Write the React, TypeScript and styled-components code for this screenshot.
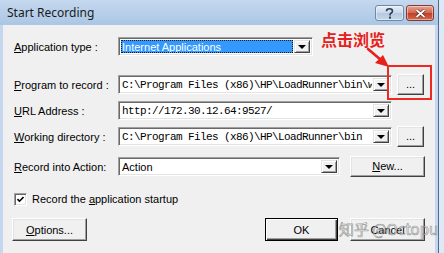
import styled, { createGlobalStyle } from 'styled-components';

const GlobalStyle = createGlobalStyle`
  body {
    margin: 0;
    background: #dde9f6;
  }
`;

const Window = styled.div`
  position: relative;
  width: 439px;
  height: 253px;
  display: flex;
  flex-direction: column;
  box-sizing: border-box;
  background: #c4d7ee;
  border-right: 1px solid #53698a;
  font-family: "Liberation Sans", Arial, sans-serif;
  font-size: 11px;
  color: #000;
  overflow: hidden;
`;

const TitleBar = styled.div`
  height: 25px;
  flex: none;
  display: flex;
  align-items: flex-start;
  padding: 0 4px 0 7px;
  background: linear-gradient(#c5d8ee, #aac6e5);
`;

const Title = styled.span`
  flex: 1;
  margin-top: 5px;
  font-family: "Noto Sans", "Open Sans", sans-serif;
  font-size: 12px;
  line-height: 16px;
  color: #1b1b1b;
`;

const CaptionButtons = styled.div`
  display: flex;
  gap: 2px;
  margin-top: 5px;
`;

const CaptionButton = styled.div<{ $close?: boolean }>`
  width: ${(p) => (p.$close ? 28 : 29)}px;
  height: 16px;
  box-sizing: border-box;
  border-radius: 3px;
  display: flex;
  align-items: center;
  justify-content: center;
  border: 1px solid ${(p) => (p.$close ? '#86392b' : '#7088a8')};
  background: ${(p) =>
    p.$close
      ? 'linear-gradient(#e7a493, #d0674f 50%, #bf3f26 51%, #d16a4e)'
      : 'linear-gradient(#e6eef7, #c9d8ea 50%, #b4c8df 51%, #c6d7ea)'};
  box-shadow: inset 0 0 0 1px rgba(255, 255, 255, 0.45);
`;

const Client = styled.div`
  flex: 1;
  margin: 0 3px;
  background: #f0f0f0;
  padding: 11px 10px 0 11px;
  display: flex;
  flex-direction: column;
`;

const Row = styled.div<{ $gap: number }>`
  display: flex;
  align-items: center;
  height: 21px;
  margin-top: ${(p) => p.$gap}px;
`;

const Label = styled.span`
  width: 104px;
  flex: none;
  white-space: nowrap;
`;

const Combo = styled.div<{ $width: number }>`
  width: ${(p) => p.$width}px;
  height: 19px;
  flex: none;
  box-sizing: border-box;
  display: flex;
  padding: 2px;
  background: #fff;
  border: 1px solid;
  border-color: #a0a0a0 #fff #fff #a0a0a0;
  box-shadow: inset 1px 1px #696969, inset -1px -1px #e3e3e3;
`;

const ComboText = styled.span<{ $mono?: boolean; $selected?: boolean }>`
  flex: 1;
  display: flex;
  align-items: center;
  overflow: hidden;
  white-space: nowrap;
  padding-left: 1px;
  margin-right: 1px;
  font-family: ${(p) =>
    p.$mono ? '"Liberation Mono", "Courier New", monospace' : '"Liberation Sans", Arial, sans-serif'};
  font-size: 11px;
  letter-spacing: ${(p) => (p.$mono ? '-0.6px' : '0')};
  background: ${(p) => (p.$selected ? '#3399ff' : 'transparent')};
  color: ${(p) => (p.$selected ? '#fff' : '#000')};
  outline: ${(p) => (p.$selected ? '1px dotted #1a1a1a' : 'none')};
  outline-offset: -1px;
`;

const DropButton = styled.span`
  width: 16px;
  flex: none;
  box-sizing: border-box;
  display: flex;
  align-items: center;
  justify-content: center;
  background: #f0f0f0;
  border: 1px solid;
  border-color: #e3e3e3 #404040 #404040 #e3e3e3;
  box-shadow: inset 1px 1px #fff, inset -1px -1px #a0a0a0;

  &::after {
    content: '';
    border-left: 4px solid transparent;
    border-right: 4px solid transparent;
    border-top: 4px solid #000;
    margin-top: 1px;
  }
`;

const Button = styled.div<{ $width: number; $height?: number; $default?: boolean }>`
  width: ${(p) => p.$width}px;
  height: ${(p) => p.$height ?? 21}px;
  flex: none;
  box-sizing: border-box;
  display: flex;
  align-items: center;
  justify-content: center;
  background: #f0f0f0;
  border: 1px solid;
  border-color: ${(p) => (p.$default ? '#000' : '#fff #404040 #404040 #fff')};
  box-shadow: ${(p) =>
    p.$default
      ? 'inset 1px 1px #fff, inset -1px -1px #404040, inset -2px -2px #a0a0a0'
      : 'inset -1px -1px #a0a0a0, inset 1px 1px #e3e3e3'};
  white-space: nowrap;
`;

const SideButton = styled(Button)<{ $offset: number }>`
  margin-left: ${(p) => p.$offset}px;
  padding-bottom: 2px;
`;

const CheckRow = styled.div`
  display: flex;
  align-items: center;
  height: 14px;
  margin-top: 15px;
  gap: 5px;
`;

const CheckBox = styled.span`
  width: 13px;
  height: 13px;
  box-sizing: border-box;
  background: #fff;
  border: 1px solid;
  border-color: #a0a0a0 #fff #fff #a0a0a0;
  box-shadow: inset 1px 1px #696969, inset -1px -1px #e3e3e3;
  display: flex;
  align-items: center;
  justify-content: center;
`;

const Footer = styled.div`
  display: flex;
  margin-top: 12px;
  margin-left: -2px;
`;

const Spacer = styled.div`
  flex: 1;
`;

const Callout = styled.span`
  position: absolute;
  left: 321px;
  top: 29px;
  font-family: "Noto Sans CJK SC", sans-serif;
  font-weight: 700;
  font-size: 16px;
  line-height: 20px;
  color: #e6211b;
`;

const Arrow = styled.svg`
  position: absolute;
  left: 360px;
  top: 44px;
`;

const Highlight = styled.div`
  position: absolute;
  left: 387px;
  top: 65px;
  width: 45px;
  height: 35px;
  box-sizing: border-box;
  border: 2px solid #ec2a22;
`;

const Watermark = styled.span`
  position: absolute;
  left: 339px;
  top: 219px;
  font-family: "Noto Sans CJK SC", "Noto Sans", sans-serif;
  font-size: 15px;
  line-height: 20px;
  color: rgba(255, 255, 255, 0.55);
  -webkit-text-stroke: 0.7px rgba(80, 80, 80, 0.55);
  white-space: nowrap;
`;

export default function App() {
  return (
    <>
      <GlobalStyle />
      <Window>
        <TitleBar>
          <Title>Start Recording</Title>
          <CaptionButtons>
            <CaptionButton>
              <svg width="9" height="11" viewBox="0 0 9 11">
                <path
                  d="M1.5 3.2 C1.5 1.5 3 0.8 4.5 0.8 C6.2 0.8 7.5 1.8 7.5 3.2 C7.5 5 5 5 5 6.8 L5 7.5"
                  fill="none"
                  stroke="#2a3f5c"
                  strokeWidth="1.6"
                />
                <rect x="4" y="8.6" width="2" height="2" fill="#2a3f5c" />
              </svg>
            </CaptionButton>
            <CaptionButton $close>
              <svg width="11" height="9" viewBox="0 0 11 9">
                <path d="M1.5 1 L9.5 8 M9.5 1 L1.5 8" stroke="#5a2018" strokeWidth="3" />
                <path d="M1.5 1 L9.5 8 M9.5 1 L1.5 8" stroke="#fff" strokeWidth="1.7" />
              </svg>
            </CaptionButton>
          </CaptionButtons>
        </TitleBar>

        <Client>
          <Row $gap={0}>
            <Label>
              <u>A</u>pplication type :
            </Label>
            <Combo $width={195}>
              <ComboText $selected>Internet Applications</ComboText>
              <DropButton />
            </Combo>
          </Row>

          <Row $gap={17}>
            <Label>
              <u>P</u>rogram to record :
            </Label>
            <Combo $width={274}>
              <ComboText $mono>C:\Program Files (x86)\HP\LoadRunner\bin\wlrun.exe</ComboText>
              <DropButton />
            </Combo>
            <SideButton $width={27} $offset={5}>
              ...
            </SideButton>
          </Row>

          <Row $gap={5}>
            <Label>
              <u>U</u>RL Address :
            </Label>
            <Combo $width={274}>
              <ComboText $mono>http://172.30.12.64:9527/</ComboText>
              <DropButton />
            </Combo>
          </Row>

          <Row $gap={5}>
            <Label>
              <u>W</u>orking directory :
            </Label>
            <Combo $width={274}>
              <ComboText $mono>C:\Program Files (x86)\HP\LoadRunner\bin</ComboText>
              <DropButton />
            </Combo>
            <SideButton $width={27} $offset={5}>
              ...
            </SideButton>
          </Row>

          <Row $gap={9}>
            <Label>
              <u>R</u>ecord into Action:
            </Label>
            <Combo $width={222}>
              <ComboText>Action</ComboText>
              <DropButton />
            </Combo>
            <SideButton $width={75} $offset={10}>
              <span>
                <u>N</u>ew...
              </span>
            </SideButton>
          </Row>

          <CheckRow>
            <CheckBox>
              <svg width="7" height="7" viewBox="0 0 7 7">
                <path d="M0.5 3 L2.5 5.2 L6.5 1" fill="none" stroke="#000" strokeWidth="1.6" />
              </svg>
            </CheckBox>
            <span>
              Record the <u>a</u>pplication startup
            </span>
          </CheckRow>

          <Footer>
            <Button $width={75} $height={23}>
              <span>
                <u>O</u>ptions...
              </span>
            </Button>
            <Spacer />
            <Button $width={73} $height={23} $default>
              OK
            </Button>
            <Spacer style={{ flex: 'none', width: 12 }} />
            <Button $width={75} $height={23}>
              Cancel
            </Button>
          </Footer>
        </Client>

        <Callout>点击浏览</Callout>
        <Arrow width="34" height="28" viewBox="0 0 34 28">
          <path d="M8 5 L21 16" stroke="#e6211b" strokeWidth="2.6" strokeLinecap="round" />
          <path d="M29 23 L15 19 L23 11 Z" fill="#e6211b" />
        </Arrow>
        <Highlight />
        <Watermark>知乎 @Octopus</Watermark>
      </Window>
    </>
  );
}
